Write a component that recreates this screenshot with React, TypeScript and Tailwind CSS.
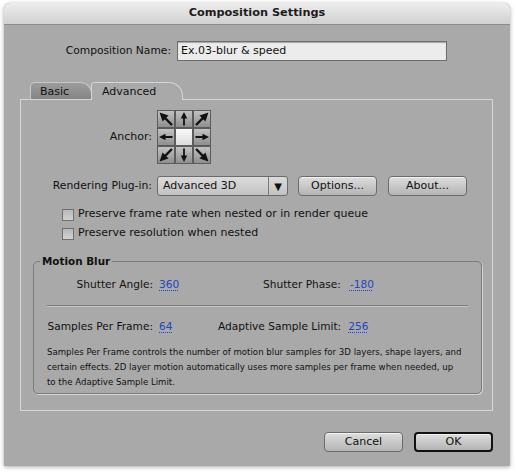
import React from 'react';

const FONT = { fontFamily: '"DejaVu Sans", "Lucida Grande", sans-serif' };

const angles = [-135, -90, -45, 180, 0, 0, 135, 90, 45];

const Arrow = ({ angle }: { angle: number }) => {
  const diag = angle % 90 !== 0;
  return (
    <svg width="16" height="16" viewBox="0 0 16 16">
      <g transform={`rotate(${angle} 8 8) ${diag ? 'translate(8 8) scale(1.3) translate(-8 -8)' : ''}`}>
        <line x1="1.5" y1="8" x2="10" y2="8" stroke="#111" strokeWidth="1.8" />
        <polygon points="15,8 8.5,4.8 8.5,11.2" fill="#111" />
      </g>
    </svg>
  );
};

const AnchorGrid = () => (
  <div className="grid grid-cols-3 w-[54px] h-[54px]">
    {angles.map((a, i) =>
      i === 4 ? (
        <div key={i} className="border border-[#5c5c5c] bg-gradient-to-b from-[#fafafa] to-[#dcdcdc]" />
      ) : (
        <div
          key={i}
          className="border border-[#5c5c5c] bg-gradient-to-b from-[#c2c2c2] to-[#8f8f8f] flex items-center justify-center"
        >
          <Arrow angle={a} />
        </div>
      )
    )}
  </div>
);

const Button = ({ label, primary }: { label: string; primary?: boolean }) => (
  <div
    className={`w-[79px] h-[20px] rounded-[4px] flex items-center justify-center text-[11px] text-[#111] bg-gradient-to-b from-[#dedede] to-[#b4b4b4] shadow-[inset_0_1px_0_#f2f2f2] ${
      primary ? 'border-2 border-[#111]' : 'border border-[#6b6b6b]'
    }`}
  >
    {label}
  </div>
);

const Check = ({ label }: { label: string }) => (
  <div className="flex items-center h-[19px] pl-[41px]">
    <div className="w-[12px] h-[12px] border border-[#6f6f6f] bg-gradient-to-b from-[#b8b8b8] to-[#d2d2d2] mr-[4px]" />
    <span className="text-[11px]">{label}</span>
  </div>
);

const Value = ({ v }: { v: string }) => (
  <span className="text-[#2544c4] underline decoration-dotted decoration-[#2544c4] underline-offset-2">{v}</span>
);

export default function App() {
  return (
    <div className="w-[516px] h-[472px] bg-white pt-[3px] pl-[4px] text-[#111]" style={FONT}>
      <div className="w-[506px] h-[463px] rounded-t-[6px] bg-[#a9a9a9] shadow-[0_1px_4px_rgba(0,0,0,0.35)] flex flex-col overflow-hidden">
        {/* title bar */}
        <div className="h-[22px] shrink-0 bg-gradient-to-b from-[#eeeeee] to-[#d0d0d0] border-b border-[#8c8c8c] flex items-center justify-center">
          <span className="text-[11.3px] font-bold text-[#1c1c1c]">Composition Settings</span>
        </div>

        {/* name row */}
        <div className="flex items-center mt-[16px] h-[20px]">
          <span className="w-[167px] text-right text-[10.7px]">Composition Name:</span>
          <div className="ml-[6px] w-[270px] h-[20px] bg-[#ececec] border border-[#6e6e6e] shadow-[inset_0_1px_1px_rgba(0,0,0,0.3)] flex items-center pl-[3px] text-[11px]">
            Ex.03-blur &amp; speed
          </div>
        </div>

        {/* tabs */}
        <div className="ml-[16px] mt-[21px] w-[473px]">
          <div className="flex items-end h-[17px] pl-[10px] relative z-10">
            <div className="w-[62px] h-[17px] rounded-tl-[5px] rounded-tr-[12px] border border-b-0 border-[#c8c8c8] bg-gradient-to-b from-[#9c9c9c] to-[#858585] text-[11px] pl-[9px] pt-[1px]">
              Basic
            </div>
            <div className="-ml-[1px] w-[92px] h-[18px] -mb-[1px] rounded-tl-[4px] rounded-tr-[14px] border border-b-0 border-[#d6d6d6] bg-[#a9a9a9] text-[11px] pl-[10px] pt-[1px]">
              Advanced
            </div>
          </div>

          {/* panel */}
          <div className="h-[312px] border border-[#d6d6d6] flex flex-col">
            <div className="flex items-center mt-[10px]">
              <span className="w-[131px] text-right text-[11px]">Anchor:</span>
              <div className="ml-[5px]">
                <AnchorGrid />
              </div>
            </div>

            <div className="flex items-center mt-[12px] h-[20px]">
              <span className="w-[131px] text-right text-[10.8px]">Rendering Plug-in:</span>
              <div className="ml-[5px] w-[131px] h-[20px] rounded-[3px] border border-[#6b6b6b] bg-gradient-to-b from-[#dcdcdc] to-[#c2c2c2] flex text-[11px]">
                <span className="flex-1 flex items-center pl-[5px]">Advanced 3D</span>
                <span className="w-[19px] border-l border-[#7a7a7a] flex items-center justify-center text-[10px]">▼</span>
              </div>
              <div className="ml-[10px]">
                <Button label="Options..." />
              </div>
              <div className="ml-[11px]">
                <Button label="About..." />
              </div>
            </div>

            <div className="mt-[9px]">
              <Check label="Preserve frame rate when nested or in render queue" />
              <Check label="Preserve resolution when nested" />
            </div>

            <fieldset className="ml-[12px] mr-[10px] mt-[11px] border border-[#7c7c7c] rounded-[5px] shadow-[1px_1px_0_#d4d4d4] pb-[3px]">
              <legend className="ml-[6px] px-[2px] text-[10.4px] font-bold">Motion Blur</legend>
              <div className="flex items-center h-[16px] mt-[7px] text-[10.6px]">
                <span className="w-[119px] text-right">Shutter Angle:</span>
                <span className="ml-[6px] w-[104px]"><Value v="360" /></span>
                <span>Shutter Phase:</span>
                <span className="ml-[9px]"><Value v="-180" /></span>
              </div>
              <div className="mx-[13px] mt-[12px] border-t border-[#7e7e7e] shadow-[0_1px_0_#c4c4c4]" />
              <div className="flex items-center h-[16px] mt-[13px] text-[10.6px]">
                <span className="w-[119px] text-right">Samples Per Frame:</span>
                <span className="ml-[6px] w-[59px]"><Value v="64" /></span>
                <span>Adaptive Sample Limit:</span>
                <span className="ml-[7px]"><Value v="256" /></span>
              </div>
              <p className="mt-[10px] px-[13px] text-[8.6px] leading-[15px] whitespace-nowrap">
                Samples Per Frame controls the number of motion blur samples for 3D layers, shape layers, and
                <br />
                certain effects. 2D layer motion automatically uses more samples per frame when needed, up
                <br />
                to the Adaptive Sample Limit.
              </p>
            </fieldset>
          </div>
        </div>

        {/* buttons */}
        <div className="flex justify-end mt-[21px] mr-[17px] gap-[11px]">
          <Button label="Cancel" />
          <Button label="OK" primary />
        </div>
      </div>
    </div>
  );
}
